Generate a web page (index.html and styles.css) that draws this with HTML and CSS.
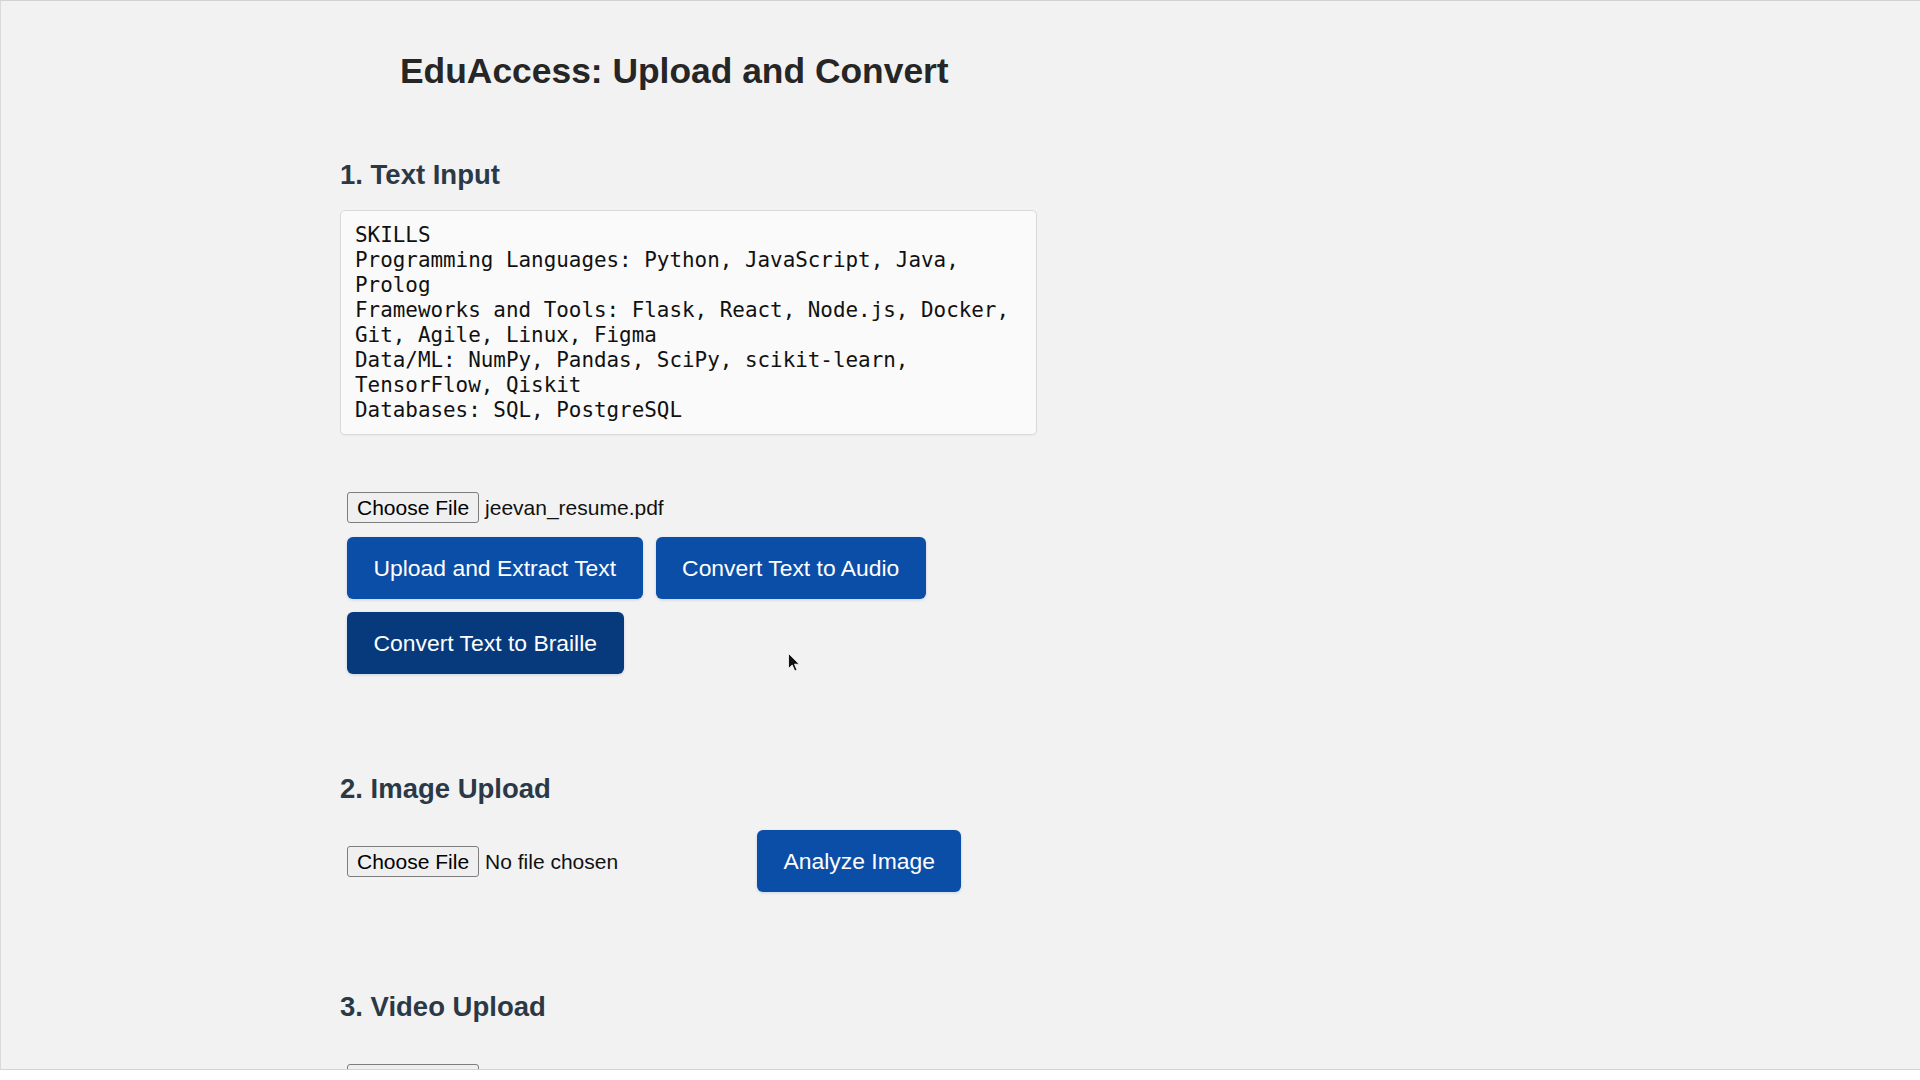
FILE: index.html
```html
<!DOCTYPE html>
<html lang="en">
<head>
<meta charset="utf-8">
<title>EduAccess: Upload and Convert</title>
<link rel="stylesheet" href="styles.css">
</head>
<body>
<div class="screen">
  <main class="container">
    <h1 class="title">EduAccess: Upload and Convert</h1>

    <section class="section section-text">
      <h2 class="section-title">1. Text Input</h2>
      <textarea class="text-input" readonly>SKILLS
Programming Languages: Python, JavaScript, Java, Prolog
Frameworks and Tools: Flask, React, Node.js, Docker, Git, Agile, Linux, Figma
Data/ML: NumPy, Pandas, SciPy, scikit-learn, TensorFlow, Qiskit
Databases: SQL, PostgreSQL</textarea>
      <div class="file-row">
        <div class="file-input">
          <button type="button" class="file-btn">Choose File</button>
          <span class="file-name">jeevan_resume.pdf</span>
        </div>
      </div>
      <div class="actions">
        <button type="button" class="btn">Upload and Extract Text</button>
        <button type="button" class="btn">Convert Text to Audio</button>
        <button type="button" class="btn btn-active">Convert Text to Braille</button>
      </div>
    </section>

    <section class="section">
      <h2 class="section-title">2. Image Upload</h2>
      <div class="upload-row">
        <div class="file-input file-input-wide">
          <button type="button" class="file-btn">Choose File</button>
          <span class="file-name">No file chosen</span>
        </div>
        <button type="button" class="btn">Analyze Image</button>
      </div>
    </section>

    <section class="section">
      <h2 class="section-title">3. Video Upload</h2>
      <div class="upload-row">
        <div class="file-input file-input-wide">
          <button type="button" class="file-btn">Choose File</button>
          <span class="file-name">No file chosen</span>
        </div>
      </div>
    </section>
  </main>

  <svg class="cursor" width="12" height="19" viewBox="0 0 12 19" aria-hidden="true">
    <path d="M0.5 0.5 L0.5 15.5 L4.2 12 L6.8 18 L9 17 L6.5 11.2 L11.3 11.2 Z" fill="#111" stroke="#fff" stroke-width="0.8" stroke-linejoin="round"/>
  </svg>
</div>
</body>
</html>
```

FILE: styles.css
```css
html, body {
  margin: 0;
  padding: 0;
  background: #ffffff;
}

body {
  font-family: "Liberation Sans", Arial, Helvetica, sans-serif;
  color: #111;
}

.screen {
  position: relative;
  box-sizing: border-box;
  height: 1070px;
  overflow: hidden;
  background: #f2f2f2;
  border-top: 1px solid #d2d2d2;
  border-bottom: 1px solid #d4d4d4;
  border-left: 1px solid #dadada;
}

.container {
  width: 697px;
  margin-left: 339px;
}

.title {
  margin: 49px 0 0 60px;
  font-size: 35.4px;
  line-height: 42px;
  font-weight: 700;
  color: #262626;
}

.section {
  margin-top: 99px;
}

.section-text {
  margin-top: 67px;
}

.section-title {
  margin: 0;
  font-size: 27.5px;
  line-height: 31px;
  font-weight: 700;
  color: #2b3947;
}

.text-input {
  display: block;
  box-sizing: border-box;
  width: 697px;
  height: 225px;
  margin: 20px 0 0 0;
  padding: 12px 12px 11px 14px;
  border: 1px solid #d9d9d9;
  border-radius: 5px;
  background: #fafafa;
  box-shadow: 0 1px 2px rgba(0, 0, 0, 0.04);
  font-family: "DejaVu Sans Mono", "Liberation Mono", monospace;
  font-size: 20.9px;
  line-height: 25px;
  color: #111;
  resize: none;
  overflow: hidden;
  outline: none;
}

.file-row {
  margin-top: 57px;
  padding-left: 7px;
}

.file-input {
  display: flex;
  align-items: center;
  gap: 6px;
}

.file-input-wide {
  width: 397px;
  flex: none;
}

.file-btn {
  box-sizing: border-box;
  height: 31px;
  margin: 0;
  padding: 0 9px;
  border: 1px solid #7d7d7d;
  border-radius: 3px;
  background: #efefef;
  font-family: "Liberation Sans", Arial, Helvetica, sans-serif;
  font-size: 21px;
  line-height: 29px;
  color: #000;
}

.file-name {
  font-size: 21px;
  line-height: 29px;
  color: #111;
}

.actions {
  display: flex;
  flex-wrap: wrap;
  gap: 13px;
  margin-top: 14px;
  padding-left: 7px;
}

.btn {
  box-sizing: border-box;
  height: 62px;
  margin: 0;
  padding: 0 26.5px;
  border: none;
  border-radius: 6px;
  background: #0b4ea7;
  box-shadow: 0 1px 3px rgba(11, 78, 167, 0.18);
  font-family: "Liberation Sans", Arial, Helvetica, sans-serif;
  font-size: 22.9px;
  line-height: 26px;
  color: #ffffff;
  white-space: nowrap;
}

.btn-active {
  background: #063a7c;
}

.upload-row {
  display: flex;
  align-items: center;
  gap: 13px;
  min-height: 62px;
  margin-top: 26px;
  padding-left: 7px;
}

.cursor {
  position: absolute;
  left: 787px;
  top: 652px;
}
```
